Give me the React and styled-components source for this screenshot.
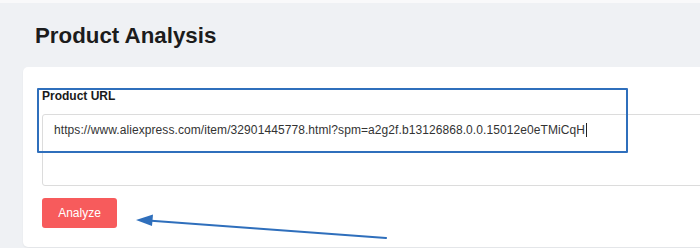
import React from "react";
import styled, { createGlobalStyle } from "styled-components";

const GlobalStyle = createGlobalStyle`
  html, body { margin: 0; padding: 0; }
  body {
    background: #f0f2f5;
    font-family: "Liberation Sans", Arial, sans-serif;
    color: #222;
    overflow: hidden;
  }
`;

const Page = styled.div`
  position: relative;
  width: 700px;
  height: 248px;
  overflow: hidden;
  border-top: 3px solid #f9f9fa;
  box-sizing: border-box;
  background: #eff1f4;
`;

const Title = styled.h1`
  margin: 0;
  padding: 20px 0 0 35px;
  font-size: 22.3px;
  line-height: 26px;
  font-weight: 700;
  color: #1c1c1c;
`;

const Card = styled.section`
  margin: 18px -60px 0 23px;
  background: #fff;
  border-radius: 5px;
  box-shadow: 0 1px 2px rgba(0, 0, 0, 0.06);
  padding: 22px 0 19px 19px;
  display: flex;
  flex-direction: column;
  align-items: flex-start;
`;

const Label = styled.label`
  font-size: 12px;
  line-height: 14px;
  font-weight: 700;
  color: #1a1a1a;
  margin-bottom: 11px;
`;

const UrlField = styled.div`
  align-self: stretch;
  height: 72px;
  box-sizing: border-box;
  border: 1px solid #dcdcdc;
  border-radius: 3px;
  padding: 7px 11px;
  font-size: 12px;
  line-height: 16px;
  letter-spacing: 0.08px;
  color: #333;
  white-space: nowrap;
`;

const Caret = styled.span`
  display: inline-block;
  width: 1px;
  height: 14px;
  background: #222;
  vertical-align: -3px;
  margin-left: 1px;
`;

const Button = styled.button`
  margin-top: 12px;
  width: 75px;
  height: 30px;
  border: none;
  border-radius: 3px;
  background: #f75b5c;
  color: #fff;
  font-family: "Liberation Sans", Arial, sans-serif;
  font-size: 12px;
  cursor: pointer;
`;

const Highlight = styled.div`
  position: absolute;
  left: 37px;
  top: 85px;
  width: 591px;
  height: 65px;
  box-sizing: border-box;
  border: 2px solid #2f6fbc;
  border-radius: 1px;
  pointer-events: none;
`;

const ArrowSvg = styled.svg`
  position: absolute;
  left: 0;
  top: -3px;
  pointer-events: none;
`;

export default function App() {
  return (
    <>
      <GlobalStyle />
      <Page>
        <Title>Product Analysis</Title>
        <Card>
          <Label>Product URL</Label>
          <UrlField>
            https://www.aliexpress.com/item/32901445778.html?spm=a2g2f.b13126868.0.0.15012e0eTMiCqH
            <Caret />
          </UrlField>
          <Button>Analyze</Button>
        </Card>
        <Highlight />
        <ArrowSvg width="700" height="248" viewBox="0 0 700 248">
          <line x1="386" y1="238" x2="148" y2="220.5" stroke="#2f6fbc" strokeWidth="2.2" strokeLinecap="round" />
          <polygon points="136,220 153,214.5 152,226" fill="#2f6fbc" />
        </ArrowSvg>
      </Page>
    </>
  );
}
